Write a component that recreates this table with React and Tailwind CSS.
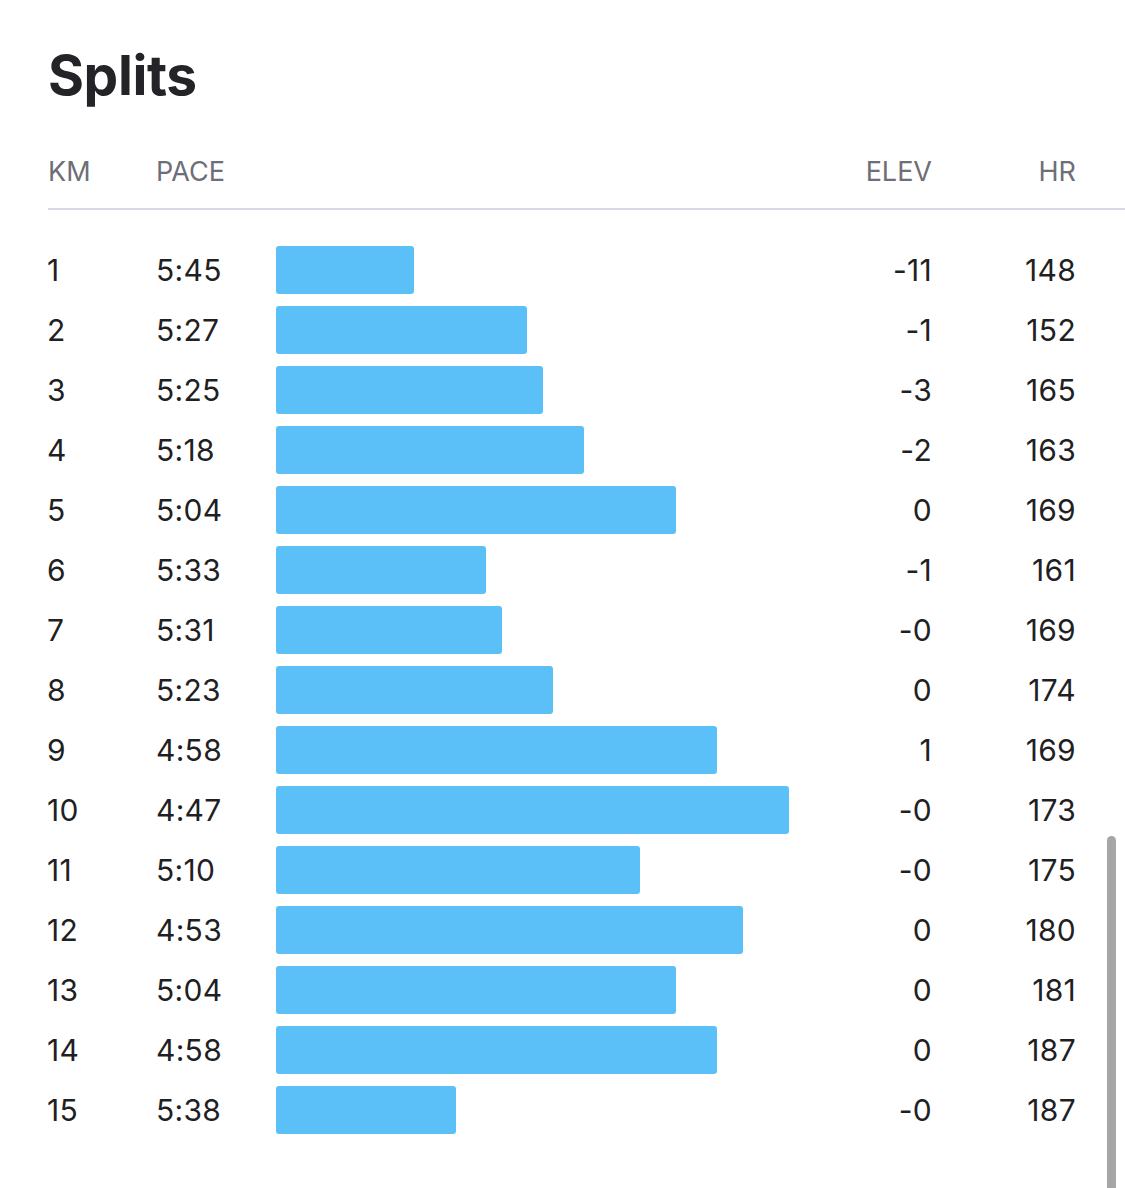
import React from 'react';

const splits = [
  { km: 1, pace: '5:45', bar: 138, elev: '-11', hr: 148 },
  { km: 2, pace: '5:27', bar: 251, elev: '-1', hr: 152 },
  { km: 3, pace: '5:25', bar: 267, elev: '-3', hr: 165 },
  { km: 4, pace: '5:18', bar: 308, elev: '-2', hr: 163 },
  { km: 5, pace: '5:04', bar: 400, elev: '0', hr: 169 },
  { km: 6, pace: '5:33', bar: 210, elev: '-1', hr: 161 },
  { km: 7, pace: '5:31', bar: 226, elev: '-0', hr: 169 },
  { km: 8, pace: '5:23', bar: 277, elev: '0', hr: 174 },
  { km: 9, pace: '4:58', bar: 441, elev: '1', hr: 169 },
  { km: 10, pace: '4:47', bar: 513, elev: '-0', hr: 173 },
  { km: 11, pace: '5:10', bar: 364, elev: '-0', hr: 175 },
  { km: 12, pace: '4:53', bar: 467, elev: '0', hr: 180 },
  { km: 13, pace: '5:04', bar: 400, elev: '0', hr: 181 },
  { km: 14, pace: '4:58', bar: 441, elev: '0', hr: 187 },
  { km: 15, pace: '5:38', bar: 180, elev: '-0', hr: 187 },
];

const App = () => {
  return (
    <div className="relative h-[1188px] w-[1125px] overflow-hidden bg-white font-['Inter',sans-serif] text-[#1f1f24]">
      {/* Title */}
      <h1 className="pl-[48px] pt-[40px] text-[55px] font-bold leading-[70px] tracking-[-0.4px] text-[#232328]">
        Splits
      </h1>

      {/* Header */}
      <div className="mt-[42px] ml-[48px] grid grid-cols-[109px_119px_1fr_110px_144px] pr-[49px] text-[27px] leading-[40px] text-[#6e6e78]">
        <span>KM</span>
        <span className="-ml-[1px]">PACE</span>
        <span />
        <span className="text-right">ELEV</span>
        <span className="text-right">HR</span>
      </div>
      <div className="ml-[48px] mt-[16px] h-[2px] bg-[#d8d8e2]" />

      {/* Rows */}
      <div className="mt-[30px] ml-[48px] pr-[49px]">
        {splits.map((s) => (
          <div
            key={s.km}
            className="grid h-[60px] grid-cols-[109px_119px_1fr_110px_144px] items-center text-[30px] tracking-[0.3px]"
          >
            <span className="-ml-[1px] pt-[1px]">{s.km}</span>
            <span className="-ml-[1px] pt-[1px]">{s.pace}</span>
            <div>
              <div
                className="h-[48px] rounded-[3px] bg-[#5cc0f8]"
                style={{ width: `${s.bar}px` }}
              />
            </div>
            <span className="pt-[1px] text-right">{s.elev}</span>
            <span className="pt-[1px] text-right">{s.hr}</span>
          </div>
        ))}
      </div>

      {/* Scrollbar */}
      <div className="absolute left-[1107px] top-[836px] h-[380px] w-[9px] rounded-full bg-[#a6a6a6]" />
    </div>
  );
};

export default App;
